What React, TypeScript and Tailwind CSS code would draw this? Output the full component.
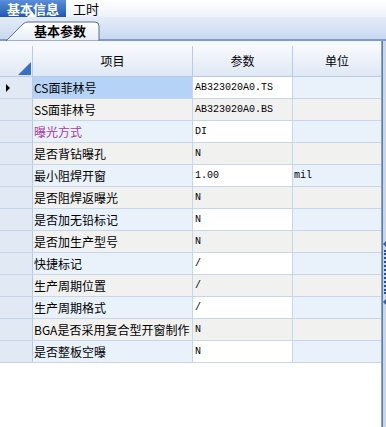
import React from "react"

type Row = { name: string; value: string; unit?: string; pink?: boolean }

const rows: Row[] = [
  { name: "CS面菲林号", value: "AB323020A0.TS" },
  { name: "SS面菲林号", value: "AB323020A0.BS" },
  { name: "曝光方式", value: "DI", pink: true },
  { name: "是否背钻曝孔", value: "N" },
  { name: "最小阻焊开窗", value: "1.00", unit: "mil" },
  { name: "是否阻焊返曝光", value: "N" },
  { name: "是否加无铅标记", value: "N" },
  { name: "是否加生产型号", value: "N" },
  { name: "快捷标记", value: "/" },
  { name: "生产周期位置", value: "/" },
  { name: "生产周期格式", value: "/" },
  { name: "BGA是否采用复合型开窗制作", value: "N" },
  { name: "是否整板空曝", value: "N" },
]

const cjk = { fontFamily: '"Noto Sans CJK SC", "Noto Sans", sans-serif' }
const mono = { fontFamily: '"Liberation Mono", "DejaVu Sans Mono", monospace' }

export default function App() {
  return (
    <div className="w-[386px] h-[427px] bg-white overflow-hidden flex flex-col text-black" style={cjk}>
      {/* top tabs */}
      <div className="h-[17px] flex bg-gradient-to-b from-white to-[#eef2f8]">
        <div className="w-[66px] relative flex items-center justify-center bg-gradient-to-b from-[#5b8fd8] to-[#2157b4] text-white text-[13px] font-bold leading-none">
          基本信息
          <div className="absolute bottom-0 left-[27px] w-0 h-0 border-l-[5px] border-r-[5px] border-b-[5px] border-l-transparent border-r-transparent border-b-white" />
        </div>
        <div className="pl-[7px] flex items-center text-[13px] leading-none">工时</div>
      </div>

      {/* sub tab strip */}
      <div className="h-[24px] relative bg-gradient-to-b from-[#e4ecf8] to-[#c9d8ef] border-b-2 border-[#7e9ccb]">
        <svg className="absolute left-0 top-0" width="110" height="24" viewBox="0 0 110 24">
          <defs>
            <linearGradient id="tabg" x1="0" y1="0" x2="0" y2="1">
              <stop offset="0" stopColor="#ffffff" />
              <stop offset="1" stopColor="#e6edf8" />
            </linearGradient>
          </defs>
          <path d="M6 24 L23 7 Q25 5 28 5 L95 5 Q99 5 99 9 L99 24 Z" fill="url(#tabg)" stroke="#5c6f8e" strokeWidth="1" />
        </svg>
        <div className="absolute left-[34px] top-[6px] text-[13px] font-bold leading-[16px]">基本参数</div>
      </div>

      {/* grid */}
      <div className="flex-1 flex">
        <div className="w-[382px] flex flex-col border-r border-[#8aa3c8]">
          <div className="h-[5px] bg-[#f4f7fb]" />
          <div className="grid grid-cols-[33px_160px_100px_88px] h-[31px] bg-gradient-to-b from-[#f7f9fd] to-[#dfe8f5] border-b border-[#b9cbe3] text-[12px]">
            <div className="relative border-r border-[#b9cbe3]">
              <div className="absolute right-[1px] bottom-[1px] w-0 h-0 border-l-[13px] border-b-[13px] border-l-transparent border-b-[#3a70c2]" />
            </div>
            <div className="flex items-center justify-center border-r border-[#b9cbe3]">项目</div>
            <div className="flex items-center justify-center border-r border-[#b9cbe3]">参数</div>
            <div className="flex items-center justify-center">单位</div>
          </div>
          {rows.map((r, i) => {
            const even = i % 2 === 1
            const sel = i === 0
            const side = even ? "bg-[#f1f1f0]" : "bg-[#e9f1fb]"
            return (
              <div key={r.name} className="grid grid-cols-[33px_160px_100px_88px] h-[22px] border-b border-[#c7d6ea] text-[12px] leading-none">
                <div className="bg-[#e1e9f5] border-r border-[#b9cbe3] flex items-center pl-[6px]">
                  {sel && <div className="w-0 h-0 border-t-[4px] border-b-[4px] border-l-[4px] border-t-transparent border-b-transparent border-l-black" />}
                </div>
                <div className={`flex items-center pl-[1px] border-r border-[#c7d6ea] whitespace-nowrap ${sel ? "bg-[#b4d3f6]" : side} ${r.pink ? "text-[#a83c9c]" : ""}`}>
                  {r.name}
                </div>
                <div className={`flex items-center pl-[2px] border-r border-[#c7d6ea] text-[10px] ${even ? "bg-[#f1f1f0]" : "bg-white"}`} style={mono}>
                  {r.value}
                </div>
                <div className={`flex items-center pl-[1px] text-[10px] ${side}`} style={mono}>
                  {r.unit}
                </div>
              </div>
            )
          })}
          <div className="flex-1 bg-white" />
        </div>
        {/* splitter */}
        <div className="flex-1 bg-[#c9d6ea] border-l border-[#5f7fb0] relative">
          <div className="absolute left-0 top-[200px] w-0 h-0 border-t-[3px] border-b-[3px] border-r-[3px] border-t-transparent border-b-transparent border-r-[#3e5f93]" />
          <div className="absolute left-[1px] top-[209px] h-[44px] w-[2px] border-l-2 border-dotted border-[#2c4f8c]" />
          <div className="absolute left-0 top-[258px] w-0 h-0 border-t-[3px] border-b-[3px] border-r-[3px] border-t-transparent border-b-transparent border-r-[#3e5f93]" />
        </div>
      </div>
    </div>
  )
}
